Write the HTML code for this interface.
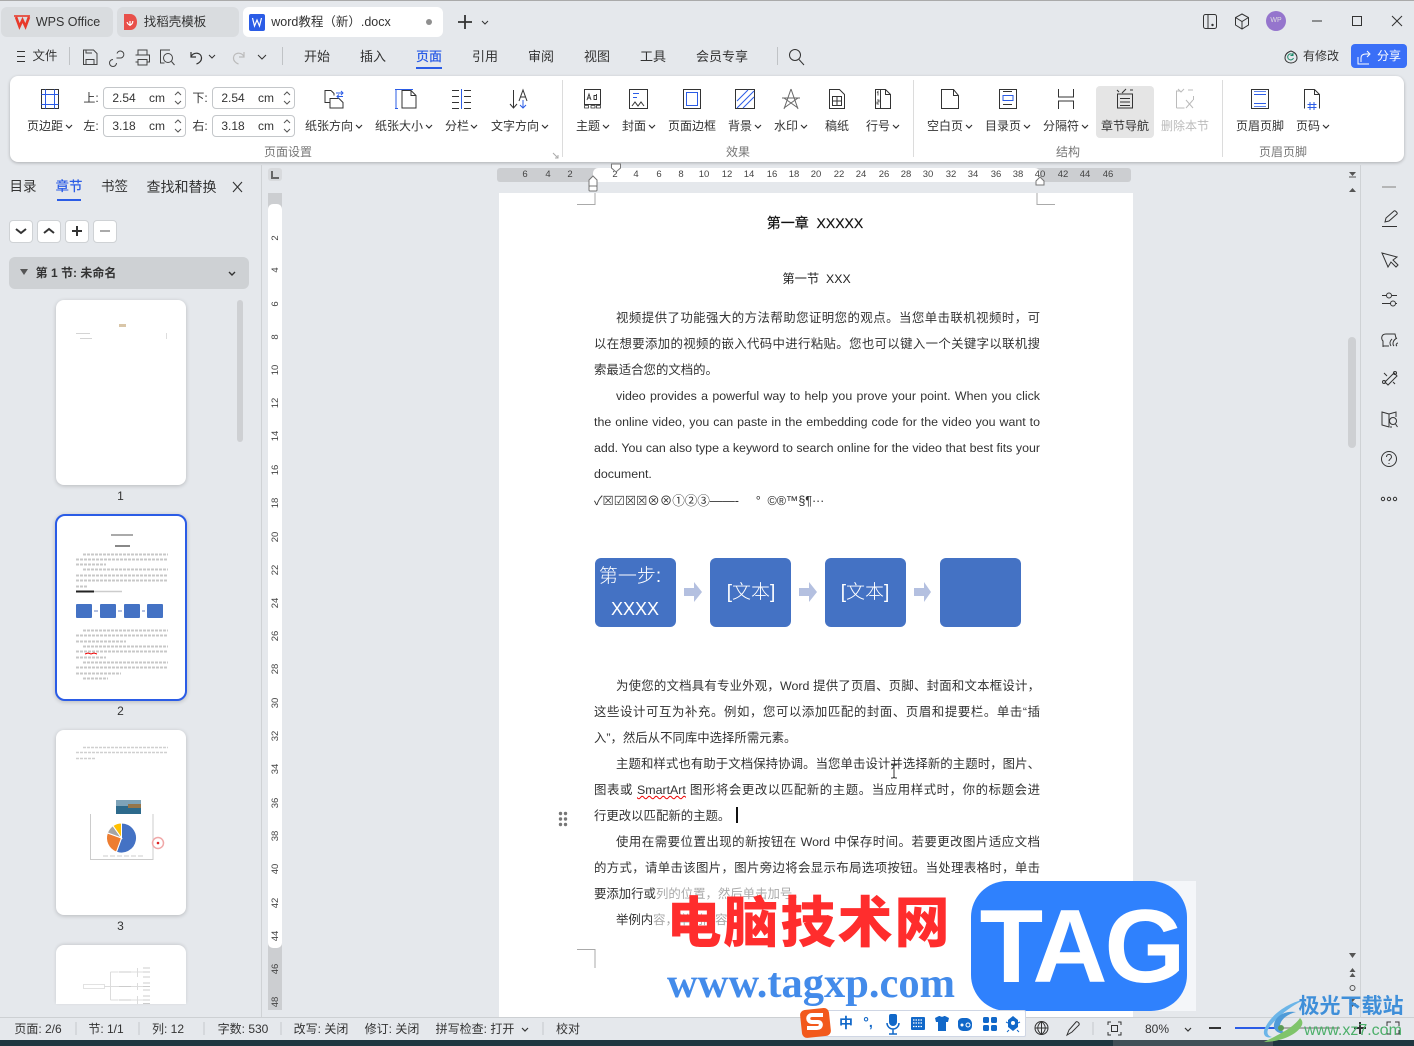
<!DOCTYPE html>
<html lang="zh"><head><meta charset="utf-8"><title>word教程</title>
<style>
html,body{margin:0;padding:0;background:#e5e8ec}
body{position:relative;width:1414px;height:1046px;overflow:hidden;font-family:"Liberation Sans","Noto Sans CJK SC",sans-serif;color:#333;font-size:12px}
.a{position:absolute}
.l{position:absolute;white-space:nowrap;line-height:16px;transform:translate(-50%,-50%)}
.g{color:#777}
.r{font-size:9.5px;color:#444}
.v{font-size:9.5px;color:#444;transform:translate(-50%,-50%) rotate(-90deg)}
.p{position:absolute;left:594px;width:446px;height:26px;line-height:26px;font-size:12.4px;color:#333;text-align:justify;text-align-last:justify;white-space:nowrap}
.i{padding-left:22px;width:424px}
.n{text-align-last:left}
.inp{position:absolute;width:83px;height:22px;border:1px solid #c4c7ca;border-radius:4px;background:#fff;box-sizing:border-box}
.sb{position:absolute;top:220px;width:24px;height:23px;background:#fff;border:1px solid #cfd2d5;border-radius:4px;box-sizing:border-box}
.th{position:absolute;left:56px;width:130px;background:#fff;border-radius:8px;box-shadow:0 1px 4px rgba(0,0,0,.2)}
.box{position:absolute;top:558px;width:81px;height:69px;background:#4472c4;border-radius:6px;color:#fff;font-size:19px}
svg{position:absolute;left:0;top:0;overflow:visible}
.s path,.s rect,.s circle,.s line{fill:none;stroke:#333;stroke-width:1}
.s .b{stroke:#2b5ce6}
.s .f{fill:#555;stroke:none}
.s .y{stroke:#c0c3c6}
</style></head><body>

<!-- top edge -->
<div class="a" style="left:0;top:0;width:1414px;height:1px;background:#aaa"></div>

<!-- tabs -->
<div class="a" style="left:1px;top:7px;width:112px;height:30px;background:#d9dcdf;border-radius:6px"></div>
<div class="a" style="left:117px;top:7px;width:122px;height:30px;background:#d9dcdf;border-radius:6px"></div>
<div class="a" style="left:243px;top:7px;width:200px;height:30px;background:#fff;border-radius:6px"></div>
<div class="l" style="left:68px;top:22px;font-size:12.5px">WPS Office</div>
<div class="l" style="left:175px;top:22px;font-size:12.5px">找稻壳模板</div>
<div class="l" style="left:331px;top:22px;font-size:12.5px">word教程（新）.docx</div>

<!-- menu -->
<div class="l" style="left:45px;top:56px;font-size:12.5px">文件</div>
<div class="l" style="left:317px;top:57px;font-size:13px">开始</div>
<div class="l" style="left:373px;top:57px;font-size:13px">插入</div>
<div class="l" style="left:429px;top:57px;font-size:13px;color:#2b5ce6;font-weight:500">页面</div>
<div class="a" style="left:416px;top:67px;width:26px;height:2px;background:#2b5ce6"></div>
<div class="l" style="left:485px;top:57px;font-size:13px">引用</div>
<div class="l" style="left:541px;top:57px;font-size:13px">审阅</div>
<div class="l" style="left:597px;top:57px;font-size:13px">视图</div>
<div class="l" style="left:653px;top:57px;font-size:13px">工具</div>
<div class="l" style="left:722px;top:57px;font-size:13px">会员专享</div>
<div class="l" style="left:1321px;top:56px">有修改</div>
<div class="a" style="left:1351px;top:44px;width:56px;height:24px;background:#3a6ff7;border-radius:4px"></div>
<div class="l" style="left:1389px;top:56px;color:#fff">分享</div>

<!-- ribbon -->
<div class="a" style="left:10px;top:76px;width:1394px;height:86px;background:#fff;border-radius:8px;box-shadow:0 1px 3px rgba(0,0,0,.25)"></div>
<div class="a" style="left:1096px;top:86px;width:58px;height:52px;background:#e5e5e5;border-radius:4px"></div>
<div class="inp" style="left:103px;top:87px"></div>
<div class="inp" style="left:212px;top:87px"></div>
<div class="inp" style="left:103px;top:115px"></div>
<div class="inp" style="left:212px;top:115px"></div>
<div class="l" style="left:91px;top:98px">上:</div>
<div class="l" style="left:91px;top:126px">左:</div>
<div class="l" style="left:200px;top:98px">下:</div>
<div class="l" style="left:200px;top:126px">右:</div>
<div class="l" style="left:124px;top:98px">2.54</div><div class="l" style="left:157px;top:98px">cm</div>
<div class="l" style="left:233px;top:98px">2.54</div><div class="l" style="left:266px;top:98px">cm</div>
<div class="l" style="left:124px;top:126px">3.18</div><div class="l" style="left:157px;top:126px">cm</div>
<div class="l" style="left:233px;top:126px">3.18</div><div class="l" style="left:266px;top:126px">cm</div>

<div class="l" style="left:45px;top:126px">页边距</div>
<div class="l" style="left:329px;top:126px">纸张方向</div>
<div class="l" style="left:399px;top:126px">纸张大小</div>
<div class="l" style="left:457px;top:126px">分栏</div>
<div class="l" style="left:515px;top:126px">文字方向</div>
<div class="l g" style="left:288px;top:152px">页面设置</div>
<div class="l" style="left:588px;top:126px">主题</div>
<div class="l" style="left:634px;top:126px">封面</div>
<div class="l" style="left:692px;top:126px">页面边框</div>
<div class="l" style="left:740px;top:126px">背景</div>
<div class="l" style="left:786px;top:126px">水印</div>
<div class="l" style="left:837px;top:126px">稿纸</div>
<div class="l" style="left:878px;top:126px">行号</div>
<div class="l g" style="left:738px;top:152px">效果</div>
<div class="l" style="left:945px;top:126px">空白页</div>
<div class="l" style="left:1003px;top:126px">目录页</div>
<div class="l" style="left:1061px;top:126px">分隔符</div>
<div class="l" style="left:1125px;top:126px">章节导航</div>
<div class="l" style="left:1185px;top:126px;color:#bbb">删除本节</div>
<div class="l g" style="left:1068px;top:152px">结构</div>
<div class="l" style="left:1260px;top:126px">页眉页脚</div>
<div class="l" style="left:1308px;top:126px">页码</div>
<div class="l g" style="left:1283px;top:152px">页眉页脚</div>

<!-- side panel -->
<div class="l" style="left:23px;top:187px;font-size:13.5px">目录</div>
<div class="l" style="left:69px;top:187px;font-size:13.5px;color:#2b5ce6;font-weight:500">章节</div>
<div class="a" style="left:57px;top:199px;width:24px;height:2px;background:#2b5ce6"></div>
<div class="l" style="left:114.500px;top:187px;font-size:13.5px">书签</div>
<div class="l" style="left:181.500px;top:187px;font-size:14px">查找和替换</div>
<div class="sb" style="left:9px"></div><div class="sb" style="left:37px"></div><div class="sb" style="left:65px"></div><div class="sb" style="left:93px"></div>
<div class="a" style="left:9px;top:257px;width:240px;height:32px;background:#ced1d4;border-radius:6px"></div>
<div class="l" style="left:76px;top:273px;font-weight:700;color:#333">第 1 节: 未命名</div>
<div class="a" style="left:237px;top:300px;width:6px;height:142px;background:#ced0d3;border-radius:3px"></div>
<div class="a" style="left:261px;top:165px;width:1px;height:853px;background:#cfd2d5"></div>

<div class="th" style="top:300px;height:185px"></div>
<div class="th" style="left:55px;top:514px;width:128px;height:183px;border:2px solid #2b5ce6;border-radius:10px"></div>
<div class="th" style="top:730px;height:185px"></div>
<div class="a" style="left:56px;top:945px;width:130px;height:59px;background:#fff;border-radius:8px 8px 0 0;box-shadow:0 -1px 3px rgba(0,0,0,.12)"></div>
<div class="l" style="left:120.500px;top:496px">1</div>
<div class="l" style="left:120.500px;top:711px">2</div>
<div class="l" style="left:120.500px;top:926px">3</div>

<!-- vertical ruler -->
<div class="a" style="left:268px;top:168px;width:14px;height:13px;background:#d8dadd;border-radius:3px"></div>
<div class="a" style="left:268px;top:193px;width:14px;height:817px;background:#ccced1"></div>
<div class="a" style="left:268px;top:204px;width:14px;height:744px;background:#fff;border-radius:5px"></div>
<div class="l v" style="left:276px;top:238px">2</div><div class="l v" style="left:276px;top:270px">4</div><div class="l v" style="left:276px;top:304px">6</div><div class="l v" style="left:276px;top:337px">8</div><div class="l v" style="left:276px;top:370px">10</div><div class="l v" style="left:276px;top:403px">12</div><div class="l v" style="left:276px;top:436px">14</div><div class="l v" style="left:276px;top:470px">16</div><div class="l v" style="left:276px;top:503px">18</div><div class="l v" style="left:276px;top:537px">20</div><div class="l v" style="left:276px;top:570px">22</div><div class="l v" style="left:276px;top:603px">24</div><div class="l v" style="left:276px;top:636px">26</div><div class="l v" style="left:276px;top:669px">28</div><div class="l v" style="left:276px;top:703px">30</div><div class="l v" style="left:276px;top:736px">32</div><div class="l v" style="left:276px;top:769px">34</div><div class="l v" style="left:276px;top:803px">36</div><div class="l v" style="left:276px;top:836px">38</div><div class="l v" style="left:276px;top:869px">40</div><div class="l v" style="left:276px;top:903px">42</div><div class="l v" style="left:276px;top:936px">44</div><div class="l v" style="left:276px;top:969px">46</div><div class="l v" style="left:276px;top:1002px">48</div>

<!-- horizontal ruler -->
<div class="a" style="left:497px;top:168px;width:634px;height:14px;background:#ccced1;border-radius:3px"></div>
<div class="a" style="left:593px;top:168px;width:447px;height:14px;background:#fff;border-radius:5px"></div>
<div class="l r" style="left:525px;top:175px">6</div><div class="l r" style="left:548px;top:175px">4</div><div class="l r" style="left:570px;top:175px">2</div><div class="l r" style="left:615px;top:175px">2</div><div class="l r" style="left:636px;top:175px">4</div><div class="l r" style="left:659px;top:175px">6</div><div class="l r" style="left:681px;top:175px">8</div><div class="l r" style="left:704px;top:175px">10</div><div class="l r" style="left:727px;top:175px">12</div><div class="l r" style="left:749px;top:175px">14</div><div class="l r" style="left:772px;top:175px">16</div><div class="l r" style="left:794px;top:175px">18</div><div class="l r" style="left:816px;top:175px">20</div><div class="l r" style="left:839px;top:175px">22</div><div class="l r" style="left:861px;top:175px">24</div><div class="l r" style="left:884px;top:175px">26</div><div class="l r" style="left:906px;top:175px">28</div><div class="l r" style="left:928px;top:175px">30</div><div class="l r" style="left:951px;top:175px">32</div><div class="l r" style="left:973px;top:175px">34</div><div class="l r" style="left:996px;top:175px">36</div><div class="l r" style="left:1018px;top:175px">38</div><div class="l r" style="left:1040px;top:175px">40</div><div class="l r" style="left:1063px;top:175px">42</div><div class="l r" style="left:1085px;top:175px">44</div><div class="l r" style="left:1108px;top:175px">46</div>

<!-- page -->
<div class="a" style="left:499px;top:193px;width:634px;height:825px;background:#fff"></div>
<div class="l" style="left:815px;top:223px;font-size:14px;color:#111;-webkit-text-stroke:.2px #111">第一章&nbsp; XXXXX</div>
<div class="l" style="left:816.500px;top:278.500px;font-size:12.3px;color:#222">第一节&nbsp; XXX</div>
<div class="p i" style="top:305px">视频提供了功能强大的方法帮助您证明您的观点。当您单击联机视频时，可</div>
<div class="p" style="top:331px">以在想要添加的视频的嵌入代码中进行粘贴。您也可以键入一个关键字以联机搜</div>
<div class="p n" style="top:357px">索最适合您的文档的。</div>
<div class="p i" style="top:383px">video provides a powerful way to help you prove your point. When you click</div>
<div class="p" style="top:409px">the online video, you can paste in the embedding code for the video you want to</div>
<div class="p" style="top:435px">add. You can also type a keyword to search online for the video that best fits your</div>
<div class="p n" style="top:461px">document.</div>
<div class="p n" style="top:488px;font-size:12.6px;color:#333;letter-spacing:-.1px">✓☒☑☒☒⊗⊗①②③——-&nbsp;&nbsp;&nbsp;&nbsp;&nbsp;°&nbsp;&nbsp;©®™§¶···</div>

<div class="box" style="left:595px"><div class="l" style="left:35px;top:19px;font-weight:300">第一步:</div><div class="l" style="left:40px;top:51px;font-weight:300;font-size:18px">XXXX</div></div>
<div class="box" style="left:710px"><div class="l" style="left:41px;top:35px;font-weight:300">[文本]</div></div>
<div class="box" style="left:825px"><div class="l" style="left:40px;top:35px;font-weight:300">[文本]</div></div>
<div class="box" style="left:940px"></div>

<div class="p i" style="top:673px">为使您的文档具有专业外观，Word 提供了页眉、页脚、封面和文本框设计，</div>
<div class="p" style="top:699px">这些设计可互为补充。例如，您可以添加匹配的封面、页眉和提要栏。单击“插</div>
<div class="p n" style="top:725px">入”，然后从不同库中选择所需元素。</div>
<div class="p i" style="top:751px">主题和样式也有助于文档保持协调。当您单击设计并选择新的主题时，图片、</div>
<div class="p" style="top:777px">图表或 <span style="text-decoration:underline wavy #e00 1px">SmartArt</span> 图形将会更改以匹配新的主题。当应用样式时，你的标题会进</div>
<div class="p n" style="top:803px">行更改以匹配新的主题。</div>
<div class="p i" style="top:829px">使用在需要位置出现的新按钮在 Word 中保存时间。若要更改图片适应文档</div>
<div class="p" style="top:855px">的方式，请单击该图片，图片旁边将会显示布局选项按钮。当处理表格时，单击</div>
<div class="p n" style="top:881px">要添加行或<span style="color:#aaa">列的位置，然后单击加号。</span></div>
<div class="p i n" style="top:907px">举例内<span style="color:#aaa">容，举例内容。</span></div>
<div class="a" style="left:736px;top:807px;width:1.5px;height:16px;background:#111"></div>

<!-- status bar -->
<div class="a" style="left:0;top:1017px;width:1414px;height:23px;background:#e5e8ec;border-top:1px solid #cdd0d3;box-sizing:border-box"></div>
<div class="a" style="left:0;top:1040px;width:1414px;height:6px;background:#1f3640"></div>
<div class="a" style="left:1113px;top:1040px;width:160px;height:6px;background:#414f57"></div>
<div class="l" style="left:38px;top:1029px">页面: 2/6</div>
<div class="l" style="left:106px;top:1029px">节: 1/1</div>
<div class="l" style="left:168px;top:1029px">列: 12</div>
<div class="l" style="left:243px;top:1029px">字数: 530</div>
<div class="l" style="left:321px;top:1029px">改写: 关闭</div>
<div class="l" style="left:392px;top:1029px">修订: 关闭</div>
<div class="l" style="left:475px;top:1029px">拼写检查: 打开</div>
<div class="l" style="left:568px;top:1029px">校对</div>
<div class="l" style="left:1157px;top:1029px">80%</div>

<!-- ICONS -->
<svg class="s" width="1414" height="1046" viewBox="0 0 1414 1046">
<!-- tab icons -->
<path d="M16 17l3.500 9.500 3-6.500 3 6.500 3.500-9.500" style="stroke:#e8392a;stroke-width:2.600;stroke-linejoin:miter"/>
<path d="M14 16h16" style="stroke:#e8392a;stroke-width:1.600"/>
<path d="M124 14h6c5 0 7 4 7 8s-2 8-7 8h-6z" style="fill:#e8504a;stroke:none"/>
<path d="M130 26v-5M130 25c-2-.5-2.800-2-2.800-3M130 25c2-.5 2.800-2 2.800-4" style="stroke:#fff;stroke-width:1.200"/>
<rect x="249" y="14" width="16" height="17" rx="2" style="fill:#2b5ce6;stroke:none"/>
<path d="M252.500 18l2 8 2.500-6 2.500 6 2-8" style="stroke:#fff;stroke-width:1.200"/>
<circle cx="429" cy="22" r="3" style="fill:#8f8f8f;stroke:none"/>
<path d="M458 22h14M465 15v14" style="stroke-width:1.800"/>
<path d="M482 21l3 3 3-3"/>
<!-- window -->
<rect x="1203.500" y="14.500" width="13" height="14" rx="2"/><path d="M1208 14.500v14"/><circle cx="1212.500" cy="25" r=".7" style="fill:#333"/>
<path d="M1242 14l6.500 3.500v7.500l-6.500 4-6.500-4v-7.500zM1235.500 17.500l6.500 4 6.500-4M1242 21.500v7.500"/>
<circle cx="1276" cy="21" r="10" style="fill:#9575cd;stroke:none"/>
<path d="M1312 21h10"/><rect x="1352.500" y="16.500" width="9" height="9"/><path d="M1392 16l10 10M1402 16l-10 10"/>
<!-- menu -->
<path d="M17 51.500h8M17 56.500h8M17 61.500h8"/>
<path d="M69.500 47v18M282.500 47v18M777.500 47v18" class="y"/>
<path d="M83.500 50h10l3.500 3.500v11h-13.500zM86 50v3h6M86 64.500v-5h8v5" style="stroke:#444"/>
<path d="M113 59.500a3.500 3.500 0 1 0 3.500 3.500M117 53.500a3.500 3.500 0 1 1 3 4.500h-3.500" style="stroke:#444"/>
<path d="M138 55v-5h9v5M135.500 55h14v7h-3M138.500 62h-3M138 59.500h9v5.500h-9z" style="stroke:#444"/>
<path d="M170 50h-9.500v13h4" style="stroke:#444"/><circle cx="168" cy="58" r="4.500" style="stroke:#444"/><path d="M171.500 61.500l3 3.500" style="stroke:#444"/>
<path d="M191 52v5h5M191 56.500c3-5 10-4 10.500 1 .3 3-2 5.500-5 6.500" style="stroke-width:1.200"/>
<path d="M209 55l3 3 3-3M258 55l4 4 4-4"/>
<path d="M244 52v5h-5M244 56.500c-3-5-10-4-10.500 1-.3 3 2 5.500 5 6.500" style="stroke:#bbb;stroke-width:1.200"/>
<circle cx="795" cy="55" r="5.500"/><path d="M799 59.500l5 5.500"/>
<path d="M1285 58c0-4 3-6 6-7 3 1 6 3 6 7 0 3-3 5-6 5s-6-2-6-5z"/><path d="M1293 55a3 3 0 1 0 .5 3M1293 53v2.500h-2.500" style="stroke:#1c8a6a"/>
<path d="M1361 62v-4c0-3 2-4 5-4h3M1367 51l3 3-3 3M1358 57v7h11" style="stroke:#fff"/>
<!-- ribbon seps -->
<path d="M562.500 80v77M913.500 80v77M1222.500 80v77" style="stroke:#dcdcdc"/>
<path d="M553 153l5 5M558 155v3h-3" style="stroke:#aaa"/>
<!-- 页边距 -->
<rect x="41.500" y="89.500" width="17" height="19"/><path class="b" d="M45.500 89.500v19M54.500 89.500v19M41.500 94.500h17M41.500 104.500h17"/>
<path d="M66 125l3 3 3-3M356 125l3 3 3-3M426 125l3 3 3-3M471 125l3 3 3-3M542 125l3 3 3-3M603 125l3 3 3-3M649 125l3 3 3-3M755 125l3 3 3-3M801 125l3 3 3-3M893 125l3 3 3-3M966 125l3 3 3-3M1024 125l3 3 3-3M1082 125l3 3 3-3M1323 125l3 3 3-3" style="stroke-width:1.200"/>
<path d="M175 95l3-3 3 3M175 101l3 3 3-3M284 95l3-3 3 3M284 101l3 3 3-3M175 123l3-3 3 3M175 129l3 3 3-3M284 123l3-3 3 3M284 129l3 3 3-3" style="stroke:#555"/>
<!-- 纸张方向 -->
<path d="M331 90.500h-6v12h5M331 90.500l3 3v2"/><path d="M330 98.500h9l4 4v5.500h-13z"/><path class="b" d="M336 93h7M341 91l2 2-2 2M343 96.500h-6M339 94.500l-2 2 2 2" />
<!-- 纸张大小 -->
<path d="M403 91.500h9l5 5v12.500h-14z" transform="translate(-1,-1)"/><path class="b" d="M396 89.500h17M396 108.500v-19M395 89.500h3M395 108.500h3"/><path d="M411 90.500v5h5"/>
<!-- 分栏 -->
<path d="M452 90.500h7M452 96.500h7M452 102.500h7M452 108.500h7M464 90.500h7M464 96.500h7M464 102.500h7M464 108.500h7"/><path class="b" d="M461.500 89v20"/>
<!-- 文字方向 -->
<path d="M513.500 90v18M510 104l3.500 4 3.500-4"/><path d="M519 101l4-11 4 11M520.500 97h5"/><path class="b" d="M523 100v8M520 105l3 3 3-3"/>
<!-- 主题 -->
<rect x="584.500" y="89.500" width="16" height="15"/><path d="M584.500 108h4v-2.500h-4zM591 108h4v-2.500h-4zM596.500 108h4v-2.500h-4z" style="stroke-width:.8"/><path d="M587 100l2-6 2 6M588 98h2M596.500 94v6M596.500 95.500h-2.500v4h2.500" style="stroke-width:.9"/>
<!-- 封面 -->
<rect x="629.500" y="89.500" width="18" height="19"/><path class="b" d="M633 93.500h6M633 97.500h4"/><path d="M632 106l3-4 3 4 3-4 3 4"/>
<!-- 页面边框 -->
<rect x="683.500" y="89.500" width="17" height="19"/><rect class="b" x="686.500" y="92.500" width="11" height="13"/>
<!-- 背景 -->
<rect x="735.500" y="89.500" width="19" height="19"/><path class="b" d="M737 101l11-11M737 108l17-17M743 108l11-11"/>
<!-- 水印 -->
<path d="M791 89l-7 20M791 89l7 20M782 98h18M784 108l14-10M798 108l-14-10" style="stroke:#666"/>
<!-- 稿纸 -->
<path d="M829.500 89.500h10l5 5v14h-15z"/><rect x="832.500" y="96.500" width="9" height="9"/><path d="M837 96.500v9M832.500 101h9"/>
<!-- 行号 -->
<path d="M875.500 89.500h10l5 5v14h-15z"/><path d="M880.500 89.500v19" /><path d="M885.500 89.500v5h5"/><path d="M877 92.500l1-1v4M877 100h2v2h-2v2h2" style="stroke-width:.8"/>
<!-- 空白页 -->
<path d="M941.500 89.500h12l5 6v13h-17zM953.500 89.500v6h5"/>
<!-- 目录页 -->
<path d="M999.500 89.500h17v19h-17z"/><path class="b" d="M1003 95.500h10v5h-10z"/><path d="M1003 91.500h9M1003 104.500h9"/>
<!-- 分隔符 -->
<path d="M1058.500 89v8h15v-8M1058.500 109v-8h15v8"/>
<!-- 章节导航 -->
<path d="M1117.500 94h15v14h-15zM1120 98.500h10M1120 102h10M1120 105.500h10"/><path d="M1117 90l2 2M1122 93l4-4M1130 90h3" />
<!-- 删除本节 -->
<path d="M1176.500 108v-17h4M1193.500 96v4M1178 89l3 3 3-3M1188 90h5M1176.500 108h8M1186 100l7 8M1193 100l-7 8" style="stroke:#bbb"/>
<!-- 页眉页脚 -->
<rect x="1251.500" y="89.500" width="17" height="19"/><path class="b" d="M1254 94.500h12M1254 103.500h12"/><path class="b" d="M1254 91.500h12M1254 106.500h12" style="stroke-width:.8"/>
<!-- 页码 -->
<path d="M1304.500 108.500v-19h10l5 5v14M1314.500 89.500v5h5"/><path class="b" d="M1310 102v8M1314 102v8M1307.500 104.500h9M1307.500 107.500h9"/>
<!-- side close etc -->
<path d="M233 182l9 10M242 182l-9 10" style="stroke-width:1.100"/>
<path d="M16 229l5 4 5-4M44 233l5-4 5 4" style="stroke-width:2"/>
<path d="M72 231h10M77 226v10" style="stroke-width:2"/>
<path d="M100 231h10" style="stroke:#aaa;stroke-width:2"/>
<path class="f" d="M20 269h8l-4 6z"/>
<path d="M229 272l3 3 3-3" style="stroke-width:1.400"/>
<path d="M272 171v7h7" style="stroke:#666;stroke-width:2"/>
<!-- ruler markers -->
<path d="M611.500 164h9v4l-4.500 4-4.500-4z" style="fill:#fff;stroke:#777"/>
<path d="M589 186v-6l4-4 4 4v6z" style="fill:#fff;stroke:#777"/><rect x="589" y="186" width="8" height="5" rx="1" style="fill:#fff;stroke:#777"/>
<path d="M1036 185v-4l4-4 4 4v4z" style="fill:#fff;stroke:#777"/>
<!-- page marks -->
<path d="M577 204.500h18V193M1055 204.500h-18V193M577 949.500h18V968" style="stroke:#aaa"/>
<!-- drag -->
<circle cx="560.500" cy="813.500" r="1.700" style="fill:#777;stroke:none"/><circle cx="565.500" cy="813.500" r="1.700" style="fill:#777;stroke:none"/><circle cx="560.500" cy="819" r="1.700" style="fill:#777;stroke:none"/><circle cx="565.500" cy="819" r="1.700" style="fill:#777;stroke:none"/><circle cx="560.500" cy="824.500" r="1.700" style="fill:#777;stroke:none"/><circle cx="565.500" cy="824.500" r="1.700" style="fill:#777;stroke:none"/>
<path d="M891 765h2l1 1 1-1h2M894 766v11M891 778h2l1-1 1 1h2"/>
<!-- arrows -->
<path d="M684 588h10v-6l8 10-8 10v-6h-10zM799 588h10v-6l8 10-8 10v-6h-10zM914 588h10v-6l7 10-7 10v-6h-10z" style="fill:#b4c0e0;stroke:none"/>
<!-- right panel -->
<path d="M1360.500 165v853" style="stroke:#cfd2d5"/>
<rect x="1348" y="337" width="8" height="111" rx="4" style="fill:#ced0d3;stroke:none"/>
<path class="f" d="M1349 172h7l-3.500 4zM1352.500 188l3.500 4h-7zM1349 953h7l-3.500 5zM1352.500 968l3 4h-6zM1352.500 973l3 4h-6zM1349 998h7l-3.500 4zM1349 1003h7l-3.500 4z"/>
<path d="M1349 177h7" style="stroke:#555"/>
<circle cx="1352.500" cy="988" r="2.500" style="stroke:#555"/>
<path d="M1382 187h14" style="stroke:#999;stroke-width:1.300"/>
<path d="M1382 226.500h15M1385 222l1-4 8-7c1-1 4 2 3 3l-8 7z"/>
<path d="M1382 253l6 14 3-5 5 5 2-2-5-5 4-3z"/>
<path d="M1382 295.500h4M1392 295.500h5M1382 303.500h9M1396 303.500h1"/><circle cx="1389" cy="295.500" r="2.500"/><circle cx="1393" cy="303.500" r="2.500"/>
<path d="M1383 347v-6c-2-2-2-7 3-7h9l1 4M1383 346h6"/><path d="M1391 346c-2-3-1-5 1-7M1394 346c-2-2-1-6 3-8M1397 346c-2-1 0-3 1-3" />
<path d="M1385 382l9-9 3 3-9 9zM1384 373l3 3M1395 384l-2-2"/><circle cx="1384" cy="382" r="1.500"/><circle cx="1395" cy="373" r="1.500"/>
<path d="M1382 412v13l7 2v-13zM1389 414l7-2v5M1382 412l7 2M1390 427h2"/><circle cx="1393" cy="421" r="3.500"/><path d="M1395.500 424l2 3"/>
<circle cx="1389" cy="459" r="7.500"/><path d="M1386.500 457c0-3.500 5-3.500 5 0 0 2-2.500 2-2.500 4M1389 463v1"/>
<circle cx="1383" cy="499" r="1.700"/><circle cx="1389" cy="499" r="1.700"/><circle cx="1395" cy="499" r="1.700"/>
<!-- status seps -->
<path d="M76 1022v13M139 1022v13M204 1022v13M281 1022v13M543 1022v13M1093 1022v13" style="stroke:#c5c8cb"/>
<path d="M522 1028l3 3 3-3M1185 1028l3 3 3-3" style="stroke-width:1.200"/>
<circle cx="1041.500" cy="1028" r="6.500"/><path d="M1035 1028h13M1041.500 1021.500v13M1041.500 1021.500c-5 4-5 9 0 13M1041.500 1021.500c5 4 5 9 0 13"/>
<path d="M1067 1035l2-5 7-8c1-1 4 1 3 3l-7 7z"/>
<path d="M1108 1025v-3h3M1118 1022h3v3M1121 1032v3h-3M1111 1035h-3v-3"/><rect x="1111.500" y="1025.500" width="6" height="6"/>
<path d="M1209 1028h12" style="stroke-width:2"/>
<path d="M1235 1028h45" style="stroke:#2b5ce6;stroke-width:2"/><path d="M1280 1028h60" style="stroke:#aaa;stroke-width:2"/>
<path d="M1354 1028h12M1360 1022v12" style="stroke-width:2"/>
<path d="M1387 1026v-4h4M1399 1026v-4h-4M1387 1030v4h4M1399 1030v4h-4"/>
<!-- thumb 1 -->
<rect x="119" y="324" width="7" height="3" style="fill:#d9c6a8;stroke:none"/>
<rect x="76" y="333" width="14" height="1" style="fill:#d4d4d4;stroke:none"/><rect x="80" y="338" width="12" height="1" style="fill:#d4d4d4;stroke:none"/><rect x="166" y="333" width="1" height="6" style="fill:#ddd;stroke:none"/>
<!-- thumb 2 -->
<rect x="111" y="534" width="22" height="2" style="fill:#aaa;stroke:none"/>
<rect x="115" y="545" width="15" height="2" style="fill:#888;stroke:none"/>
<path d="M83 554.500h85M76 559.500h92M76 564.500h30M83 569.500h85M76 575.500h92M76 580.500h92M76 586.500h12" style="stroke:#c8c8c8;stroke-width:2;stroke-dasharray:3 1"/>
<path d="M76 591.500h18" style="stroke:#222;stroke-width:2"/><path d="M94 591.500h28" style="stroke:#ccc;stroke-width:1.500"/>
<rect x="76" y="604" width="16" height="14" rx="1" style="fill:#4472c4;stroke:none"/><rect x="100" y="604" width="16" height="14" rx="1" style="fill:#4472c4;stroke:none"/><rect x="124" y="604" width="16" height="14" rx="1" style="fill:#4472c4;stroke:none"/><rect x="147" y="604" width="16" height="14" rx="1" style="fill:#4472c4;stroke:none"/>
<path d="M94 611h4M118 611h4M142 611h3" style="stroke:#b4c0e0;stroke-width:2"/>
<path d="M83 630.500h85M76 635.500h92M76 641.500h50M83 646.500h85M76 651.500h92M76 657.500h30M83 662.500h85M76 667.500h92M76 673.500h45M83 678.500h25" style="stroke:#c8c8c8;stroke-width:2;stroke-dasharray:3 1"/>
<path d="M85 654l3-1 3 1 3-1 3 1" style="stroke:#e00"/>
<!-- thumb 3 -->
<path d="M83 747.500h85M76 752.500h92M76 758.500h20" style="stroke:#d0d0d0;stroke-width:1.600;stroke-dasharray:3 1"/>
<rect x="116" y="800" width="25" height="14" style="fill:#2d6a8c;stroke:none"/><rect x="116" y="800" width="25" height="6" style="fill:#7ea3b8;stroke:none"/><rect x="128" y="804" width="13" height="4" style="fill:#96764a;stroke:none"/>
<path d="M90.500 814v45.500h62.500V814" style="stroke:#ccc"/>
<path d="M121.500 838V823A15 15 0 1 1 116.400 852.100Z" style="fill:#4472c4;stroke:#fff"/>
<path d="M121.500 838L116.400 852.100A15 15 0 0 1 107.400 832.900Z" style="fill:#ed7d31;stroke:#fff"/>
<path d="M121.500 838L107.400 832.900A15 15 0 0 1 112.900 825.700Z" style="fill:#a5a5a5;stroke:#fff"/>
<path d="M121.500 838L112.900 825.700A15 15 0 0 1 121.500 823Z" style="fill:#ffc000;stroke:#fff"/>
<path d="M103 856h40" style="stroke:#ccc;stroke-width:1;stroke-dasharray:5 2"/>
<circle cx="158" cy="843" r="5.500" style="stroke:#f0a8a8;stroke-width:1.500"/><circle cx="158" cy="843" r="1.300" style="fill:#d22;stroke:none"/>
<!-- thumb 4 -->
<rect x="83.500" y="984.500" width="21" height="4" style="stroke:#e2e2e2"/>
<path d="M104 986.500h15M110.500 972v28M110.500 972h8M110.500 1000h8M131 972h12M131 986.500h12M131 1000h12M137.500 968v9M137.500 983v7M137.500 996v8" style="stroke:#dcdcdc"/>
<path d="M119 972h12M119 986.500h12M119 1000h12M143 968h7M143 972h7M143 977h7M143 983h7M143 986.500h7M143 990h7M143 996h7M143 1000h7M143 1003.500h7" style="stroke:#ccc"/>
</svg>
<div class="l" style="left:1276px;top:21px;color:#ddd;font-size:7px">WP</div>

<!-- watermark -->
<div class="l" style="left:809px;top:918px;font-family:'Noto Sans CJK SC','Liberation Sans',sans-serif;font-weight:900;font-size:55px;line-height:60px;color:#ff2d2d;letter-spacing:2px">电脑技术网</div>
<div class="l" style="left:811px;top:984px;font-family:'Liberation Serif',serif;font-weight:700;font-size:42.500px;line-height:40px;color:#2f7fe8;opacity:.9">www.tagxp.com</div>
<div class="a" style="left:1133px;top:881px;width:63px;height:130px;background:#f4f6f9"></div>
<div class="a" style="left:971px;top:881px;width:216px;height:130px;background:#2f81fd;border-radius:36px"></div>
<div class="l" style="left:1081px;top:947px;font-family:'Liberation Sans',sans-serif;font-weight:700;font-size:104px;line-height:110px;color:#fff;letter-spacing:-3px">TAG</div>

<!-- jiguang watermark -->
<svg width="1414" height="1046" viewBox="0 0 1414 1046">
<path d="M1306 999c-16 3-34 14-41 29-3 6 0 11 7 9-7-2-5-8 0-13 8-9 20-19 34-25z" fill="#6bb5e8"/>
<path d="M1296 1012c-14-2-23 7-22 15 1 6 9 8 16 6-7 0-11-3-10-8 1-6 8-11 16-13z" fill="#4f9bd8"/>
<path d="M1300 1018c-7 10-22 17-36 24 12 0 32-5 38-17 1-3 0-5-2-7z" fill="#7fc46a"/>
<circle cx="1281" cy="1028" r="3" fill="#5d9c55"/>
</svg>
<div class="l" style="left:1351px;top:1007px;font-size:21px;font-weight:700;line-height:24px;color:#3f8fd9">极光下载站</div>
<div class="l" style="left:1353px;top:1031px;font-size:16px;font-weight:400;line-height:18px;color:#4caf6a">www.xz7.com</div>

<!-- IME -->
<div class="a" style="left:808px;top:1010px;width:218px;height:27px;background:#fff;border:1px solid #cfd6e4;box-sizing:border-box;border-radius:2px"></div>
<svg width="1414" height="1046" viewBox="0 0 1414 1046">
<rect x="801" y="1009" width="29" height="28" rx="5" transform="rotate(-6 815 1023)" fill="#f2591c"/>
<path d="M823 1015h-11c-5 0-5 7 0 7h6c4 0 4 6-1 6h-10" fill="none" stroke="#fff" stroke-width="4"/>
<path d="M891 1014h4a2 2 0 0 1 2 2v6a4 4 0 0 1-8 0v-6a2 2 0 0 1 2-2z" fill="#1168c9"/>
<path d="M887 1023a6 6 0 0 0 12 0M893 1029v5M889 1034h8" fill="none" stroke="#1168c9" stroke-width="1.500"/>
<rect x="911" y="1017" width="14" height="13" rx="1" fill="#1168c9"/>
<path d="M913 1020h10M913 1023h10M913 1026.500h10" stroke="#fff" stroke-dasharray="1.500 1" stroke-width="1.300"/>
<path d="M935 1018l4-2h1c1 1 3 1 4 0h1l4 2-1 4h-2v9h-8v-9h-2z" fill="#1168c9"/>
<path d="M958 1021a5 5 0 0 1 5-3h4a6 6 0 0 1 5 5v3a5 5 0 0 1-5 5h-4a5 5 0 0 1-5-5z" fill="#1168c9"/>
<circle cx="962" cy="1025" r="1.500" fill="#fff"/><circle cx="968" cy="1025" r="2" fill="none" stroke="#fff"/>
<rect x="983" y="1017" width="6" height="6" rx="1.500" fill="#1168c9"/><rect x="991" y="1017" width="6" height="6" rx="1.500" fill="#1168c9"/><rect x="983" y="1025" width="6" height="6" rx="1.500" fill="#1168c9"/><rect x="991" y="1025" width="6" height="6" rx="1.500" fill="#1168c9"/>
<path d="M1013 1016l5 4v7l-5 4-5-4v-7z" fill="#1168c9"/><circle cx="1013" cy="1023" r="2" fill="#fff"/><path d="M1006 1022l2 1M1020 1022l-2 1M1009 1030l-2 2M1017 1030l2 2" stroke="#1168c9"/>
</svg>
<div class="l" style="left:846px;top:1023px;font-size:14px;font-weight:700;color:#1168c9">中</div>
<div class="l" style="left:868px;top:1022px;font-size:14px;font-weight:700;color:#1168c9">°,</div>
</body></html>
